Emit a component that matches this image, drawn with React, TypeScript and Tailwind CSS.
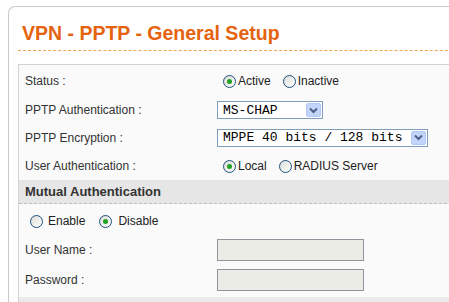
import React from "react";

const Radio = ({ checked = false }: { checked?: boolean }) => (
  <span className="relative inline-flex w-[13px] h-[13px] shrink-0 items-center justify-center rounded-full border border-[#1c5180] bg-gradient-to-br from-[#dcdcd6] to-white">
    {checked && <span className="w-[5px] h-[5px] rounded-full bg-[#21a121]" />}
  </span>
);

const FakeSelect = ({ value, width }: { value: string; width: string }) => (
  <div
    className={`flex h-[18px] items-center justify-between border border-[#7f9db9] bg-white pl-[5px] pr-[1px] ${width}`}
  >
    <span className="font-['Liberation_Mono',monospace] text-[13px] leading-none text-black whitespace-pre">{value}</span>
    <span className="flex h-[14px] w-[15px] items-center justify-center rounded-[2px] border border-[#b4c8f6] bg-[#c3d4fb]">
      <svg width="9" height="7" viewBox="0 0 9 7">
        <path d="M1 1.5 L4.5 5 L8 1.5" fill="none" stroke="#4d6185" strokeWidth="2" />
      </svg>
    </span>
  </div>
);

const Row = ({ label, h, children }: { label: string; h: string; children: React.ReactNode }) => (
  <div className={`flex items-center ${h}`}>
    <div className="w-[198px] shrink-0 pl-[6px] text-[12px] text-[#333]">{label}</div>
    {children}
  </div>
);

export default function App() {
  return (
    <div className="w-[449px] h-[302px] overflow-hidden bg-white font-['Liberation_Sans',Arial,sans-serif]">
      <div className="ml-[8px] mt-[6px] w-[480px] h-[320px] rounded-tl-[7px] border-l border-t border-[#c9c9c9] bg-[#fefefe] pl-[9px]">
        <div className="border-b border-dashed border-[#eea653] pt-[14px] pb-[5px] pl-[4px]">
          <h1 className="text-[19.5px] font-bold leading-[24px] text-[#e5630e]">VPN - PPTP - General Setup</h1>
        </div>
        <div className="mt-[13px] border border-[#d2d2d2] bg-[#fafafa]">
          <Row label="Status :" h="h-[32px]">
            <div className="flex items-center pl-[6px] text-[12px] text-[#222]">
              <Radio checked />
              <span className="ml-[2px] mr-[12px]">Active</span>
              <Radio />
              <span className="ml-[2px]">Inactive</span>
            </div>
          </Row>
          <Row label="PPTP Authentication :" h="h-[26px]">
            <FakeSelect value="MS-CHAP" width="w-[106px]" />
          </Row>
          <Row label="PPTP Encryption :" h="h-[29px]">
            <FakeSelect value="MPPE 40 bits / 128 bits" width="w-[211px]" />
          </Row>
          <Row label="User Authentication :" h="h-[28px]">
            <div className="flex items-center pl-[6px] text-[12px] text-[#222]">
              <Radio checked />
              <span className="ml-[2px] mr-[12px]">Local</span>
              <Radio />
              <span className="ml-[2px]">RADIUS Server</span>
            </div>
          </Row>
          <div className="flex h-[24px] items-center border-b border-dashed border-[#bdbdbd] bg-[#e6e6e6] pl-[6px]">
            <span className="text-[13px] font-bold text-[#333]">Mutual Authentication</span>
          </div>
          <div className="flex h-[34px] items-center pl-[11px] text-[12px] text-[#222]">
            <Radio />
            <span className="ml-[5px] mr-[14px]">Enable</span>
            <Radio checked />
            <span className="ml-[6px]">Disable</span>
          </div>
          <Row label="User Name :" h="h-[24px]">
            <div className="h-[22px] w-[147px] border border-[#8f969e] bg-[#ecece6]" />
          </Row>
          <Row label="Password :" h="h-[35px]">
            <div className="h-[22px] w-[147px] border border-[#8f969e] bg-[#ecece6]" />
          </Row>
          <div className="h-[20px] bg-[#ebebeb]" />
        </div>
      </div>
    </div>
  );
}
